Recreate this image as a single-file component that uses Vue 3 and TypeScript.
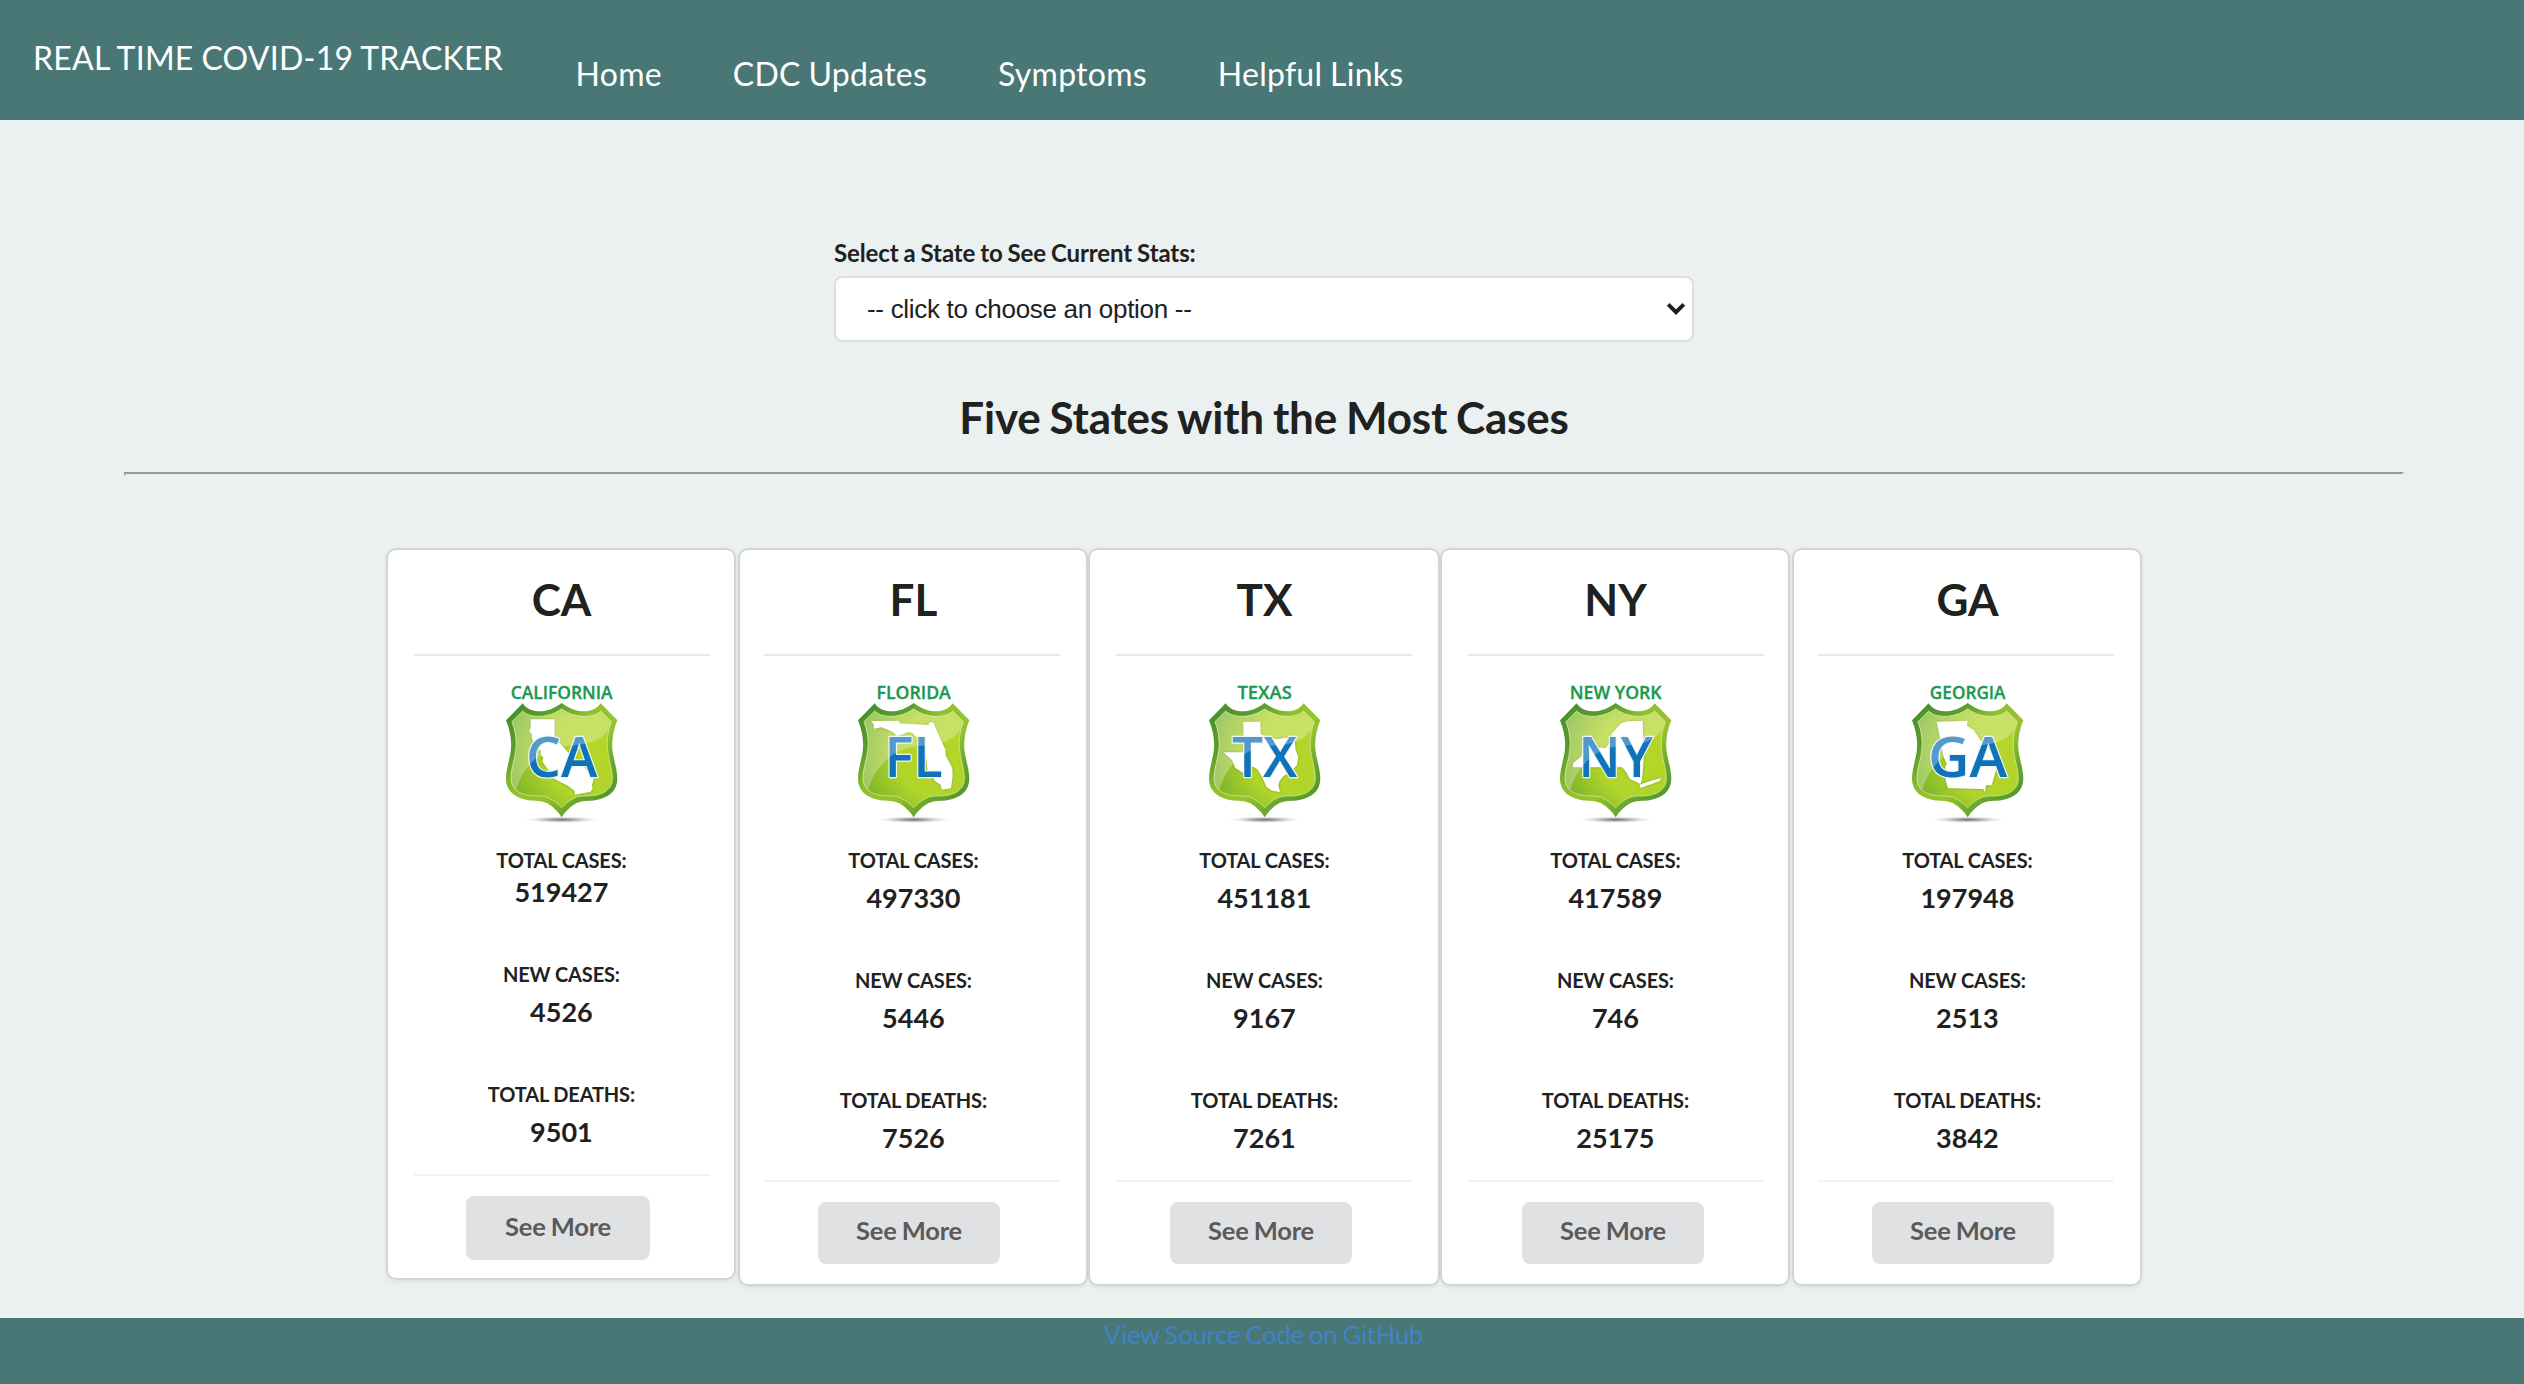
<script setup lang="ts">
interface StateStats {
  code: string
  name: string
  nameWidth: number
  codeWidth: number
  outline: string
  cases: number
  newCases: number
  deaths: number
}

const navLinks: string[] = ['Home', 'CDC Updates', 'Symptoms', 'Helpful Links']

const states: StateStats[] = [
  {
    code: 'CA', name: 'CALIFORNIA', nameWidth: 305, codeWidth: 214,
    outline: 'M107 118L179 118L179 172L215 212L292 285L296 298L291 315L293 325L287 335L240 344L238 332L220 318L200 308L170 292L160 270L142 245L145 232L137 226L138 214L125 200L111 177L110 162L103 155L107 140Z',
    cases: 519427, newCases: 4526, deaths: 9501,
  },
  {
    code: 'FL', name: 'FLORIDA', nameWidth: 223, codeWidth: 175,
    outline: 'M72 123L155 122L159 130L245 135L247 126L261 128L265 142L296 210L296 225L316 265L317 290L312 325L284 329L281 315L263 302L253 280L241 270L236 220L228 192L213 177L195 158L183 156L168 163L150 168L136 155L118 147L103 142L81 146L80 133Z',
    cases: 497330, newCases: 5446, deaths: 7526,
  },
  {
    code: 'TX', name: 'TEXAS', nameWidth: 163, codeWidth: 196,
    outline: 'M136 125L187 125L188 162L207 170L237 178L262 173L290 180L293 210L301 230L297 255L282 272L257 288L245 302L241 315L246 336L222 332L205 320L192 290L178 268L165 260L147 265L137 280L112 264L102 240L76 217L136 217Z',
    cases: 451181, newCases: 9167, deaths: 7261,
  },
  {
    code: 'NY', name: 'NEW YORK', nameWidth: 276, codeWidth: 224,
    outline: 'M73 248L96 230L101 207L141 202L171 204L186 180L187 162L216 130L236 124L281 122L283 180L284 240L281 280L278 302L274 312L243 297L231 275L219 262L71 262ZM271 314L306 302L337 293L331 304L275 324Z',
    cases: 417589, newCases: 746, deaths: 25175,
  },
  {
    code: 'GA', name: 'GEORGIA', nameWidth: 227, codeWidth: 238,
    outline: 'M107 125L200 122L198 137L218 150L238 180L263 205L288 260L281 285L272 316L255 316L252 336L246 327L141 325L134 302L133 260L137 252L128 230Z',
    cases: 197948, newCases: 2513, deaths: 3842,
  },
]

const shieldOuter =
  'M200 69C175 88 150 95 128 94C108 93 93 84 83 70L33 121C45 150 50 180 48 205C46 235 33 265 33 298C34 335 62 354 96 360C118 364 140 361 157 370C176 381 190 396 200 412C210 396 224 381 243 370C260 361 282 364 304 360C338 354 366 335 367 298C367 265 354 235 352 205C350 180 355 150 367 121L317 70C307 84 292 93 272 94C250 95 225 88 200 69Z'
const shieldInner =
  'M200 87C178 102 152 110 128 109C106 108 92 102 83 93L51 125C61 150 65 180 63 205C61 235 48 265 48 295C48 325 70 341 100 346C125 350 145 345 162 354C180 363 192 374 200 383C208 374 220 363 238 354C255 345 275 350 300 346C330 341 352 325 352 295C352 265 339 235 337 205C335 180 339 150 349 125L317 93C308 102 294 108 272 109C248 110 222 102 200 87Z'
</script>

<template>
  <div class="page">
    <header class="bar">
      <span class="brand">REAL TIME COVID-19 TRACKER</span>
      <nav class="nav">
        <a v-for="link in navLinks" :key="link">{{ link }}</a>
      </nav>
    </header>

    <main class="content">
      <div class="picker">
        <label class="picker-label">Select a State to See Current Stats:</label>
        <div class="select">
          <span>-- click to choose an option --</span>
          <svg class="chevron" width="20" height="14" viewBox="0 0 20 14">
            <path d="M2.2 2.4L10 10.2L17.8 2.4" fill="none" stroke="#1e1f1f" stroke-width="4" />
          </svg>
        </div>
      </div>

      <h2 class="title">Five States with the Most Cases</h2>
      <div class="rule"></div>

      <section class="cards">
        <article v-for="s in states" :key="s.code" class="card">
          <h2 class="code">{{ s.code }}</h2>
          <div class="divider"></div>
          <svg class="badge" viewBox="0 0 400 441">
            <defs>
              <linearGradient :id="`rim-${s.code}`" gradientUnits="userSpaceOnUse" x1="60" y1="90" x2="340" y2="370">
                <stop offset="0" stop-color="#4a902e" />
                <stop offset="0.22" stop-color="#5c9f2b" />
                <stop offset="0.42" stop-color="#92c02a" />
                <stop offset="0.62" stop-color="#94c42a" />
                <stop offset="0.82" stop-color="#68a62b" />
                <stop offset="1" stop-color="#4d962a" />
              </linearGradient>
              <radialGradient :id="`fill-${s.code}`" gradientUnits="userSpaceOnUse" cx="280" cy="225" r="260">
                <stop offset="0" stop-color="#b5d62a" />
                <stop offset="0.5" stop-color="#b1d42a" />
                <stop offset="1" stop-color="#73b02a" />
              </radialGradient>
              <radialGradient :id="`shade-${s.code}`">
                <stop offset="0" stop-color="#6a6a6a" />
                <stop offset="0.4" stop-color="#8a8a8a" stop-opacity="0.6" />
                <stop offset="1" stop-color="#ffffff" stop-opacity="0" />
              </radialGradient>
              <clipPath :id="`clip-${s.code}`"><path :d="shieldInner" /></clipPath>
            </defs>
            <text
              class="badge-name" x="200" y="57" text-anchor="middle"
              :textLength="s.nameWidth" lengthAdjust="spacingAndGlyphs"
            >{{ s.name }}</text>
            <ellipse cx="200" cy="419" rx="118" ry="11" :fill="`url(#shade-${s.code})`" />
            <path :d="shieldOuter" :fill="`url(#rim-${s.code})`" />
            <path :d="shieldInner" :fill="`url(#fill-${s.code})`" stroke="#cfe59a" stroke-width="2.5" />
            <path class="badge-map" :d="s.outline" />
            <text
              class="badge-code" x="200" y="290" text-anchor="middle"
              :textLength="s.codeWidth" lengthAdjust="spacingAndGlyphs"
            >{{ s.code }}</text>
            <path
              d="M63 332C90 245 145 208 200 200C265 192 325 196 352 125L352 60L30 60L30 332Z"
              fill="#ffffff" fill-opacity="0.28" :clip-path="`url(#clip-${s.code})`"
            />
          </svg>
          <dl class="stats">
            <dt>TOTAL CASES:</dt>
            <dd>{{ s.cases }}</dd>
            <dt>NEW CASES:</dt>
            <dd>{{ s.newCases }}</dd>
            <dt>TOTAL DEATHS:</dt>
            <dd>{{ s.deaths }}</dd>
          </dl>
          <div class="divider faint"></div>
          <button class="more" type="button">See More</button>
        </article>
      </section>
    </main>

    <footer class="foot">
      <a>View Source Code on GitHub</a>
    </footer>
  </div>
</template>

<style>
body {
  background: #ebf0f0;
}
</style>

<style scoped>
.page {
  display: flex;
  flex-direction: column;
  height: 1384px;
  overflow: hidden;
  background: #ebf0f0;
  color: #202121;
  font-family: Lato, sans-serif;
}
.bar {
  display: flex;
  align-items: flex-start;
  box-sizing: border-box;
  height: 120px;
  padding: 39px 33px 0;
  gap: 72.5px;
  background: #487776;
  color: #fff;
  font-size: 32px;
  letter-spacing: 0.25px;
  word-spacing: -0.6px;
  line-height: 38px;
  white-space: nowrap;
}
.nav {
  display: flex;
  gap: 71px;
  padding-top: 16px;
}
.content {
  flex: 1;
  width: 2280px;
  margin-left: 124px;
  padding-top: 118px;
}
.picker {
  width: 860px;
  margin: 0 auto;
}
.picker-label {
  display: block;
  margin-bottom: 8px;
  font-size: 24px;
  font-weight: 700;
  letter-spacing: -0.12px;
  word-spacing: -0.7px;
  line-height: 30px;
}
.select {
  display: flex;
  align-items: center;
  justify-content: space-between;
  box-sizing: border-box;
  height: 66px;
  padding: 0 6px 0 31px;
  border: 2px solid #dededf;
  border-radius: 8px;
  background: #fff;
  font-family: "Liberation Sans", Arial, sans-serif;
  font-size: 26px;
  letter-spacing: -0.3px;
}
.title,
.code {
  margin: 0;
  font-size: 44px;
  font-weight: 700;
  line-height: 52px;
  text-align: center;
}
.title {
  margin-top: 49px;
  letter-spacing: -0.2px;
  word-spacing: -1.5px;
}
.rule {
  margin: 29px 0 74px;
  border: 2px solid;
  border-color: #999a9a #eeeeee #eeeeee #999a9a;
}
.cards {
  display: grid;
  grid-template-columns: 352px 350px 352px 352px 346px;
  align-items: start;
  margin-left: 264px;
}
.card {
  display: flex;
  flex-direction: column;
  align-items: center;
  box-sizing: border-box;
  width: 346px;
  padding: 23px 0 20px;
  border-radius: 8px;
  background: #fff;
  box-shadow: 0 2px 6px 0 #d4d4d5, 0 0 0 2px #d4d4d5;
}
.card:nth-child(3) {
  width: 348px;
}
.code {
  padding-left: 1px;
}
.divider {
  width: 296px;
  height: 2px;
  margin: 29px 0 24px;
  background: #e9e9ea;
}
.divider.faint {
  margin: 25px 0 20px;
  background: #f2f2f2;
}
.card:nth-child(1) .divider,
.card:nth-child(4) .divider {
  margin-left: 2px;
}
.card:nth-child(2) .divider,
.card:nth-child(5) .divider {
  margin-right: 2px;
}
.badge {
  width: 133.33px;
  height: 147px;
  margin: 0 0 21px 1px;
}
.badge-name {
  fill: #1a9850;
  stroke: #1a9850;
  stroke-width: 1px;
  font: 600 54.5px "Open Sans", sans-serif;
}
.badge-map {
  fill: #fff;
  filter: drop-shadow(0 0 3px rgba(70, 120, 20, 0.6));
}
.badge-code {
  fill: #1072bb;
  stroke: #eef5f0;
  stroke-width: 7px;
  stroke-linejoin: round;
  paint-order: stroke;
  font: 600 168px "Open Sans", sans-serif;
}
.stats {
  margin: 0;
  padding-left: 0.8px;
  text-align: center;
}
.stats dt {
  font-size: 20px;
  font-weight: 700;
  letter-spacing: -0.15px;
  line-height: 24px;
}
.stats dd {
  margin: 9px 0 53px;
  font-size: 27px;
  font-weight: 700;
  line-height: 34px;
}
.stats dd:last-child {
  margin-bottom: 0;
}
.more {
  width: 182px;
  height: 62px;
  margin: 0 6px 0 0;
  padding: 0 0 6px;
  border: 0;
  border-radius: 8px;
  background: #e0e1e2;
  color: #5a5a5a;
  font: 700 25.5px/30px Lato, sans-serif;
  letter-spacing: -0.2px;
  word-spacing: -0.9px;
}
.card:nth-child(2) .more,
.card:nth-child(5) .more {
  margin-right: 8px;
}
.card:nth-child(4) .more {
  margin-right: 4px;
}
.card:first-child {
  padding-bottom: 18px;
}
.card:first-child .stats dd:nth-of-type(1) {
  margin-top: 3px;
}
.card:first-child .more {
  width: 184px;
  height: 64px;
  padding-bottom: 4px;
}
.foot {
  height: 66px;
  background: #487776;
  color: #4183c4;
  font-size: 25.6px;
  letter-spacing: -0.18px;
  word-spacing: -1.3px;
  line-height: 33px;
  text-align: center;
}
.foot a {
  margin-left: 3px;
}
</style>
